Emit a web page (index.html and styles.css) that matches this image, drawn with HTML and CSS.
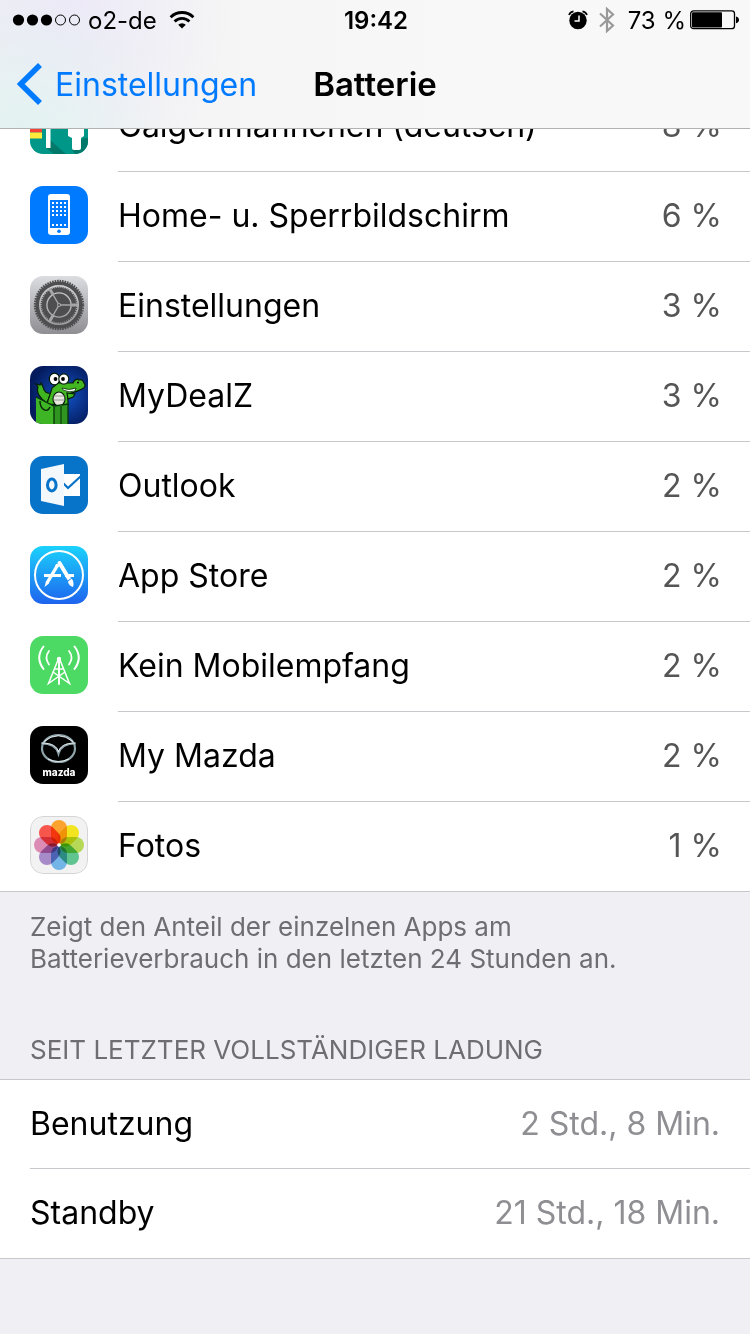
FILE: index.html
```html
<!DOCTYPE html>
<html lang="de">
<head>
    <meta charset="UTF-8">
    <meta name="viewport" content="width=device-width, initial-scale=1.0">
    <title>Batterie</title>
    <link rel="stylesheet" href="styles.css">
</head>
<body>

<header class="header">
    <div class="status-bar">
        <div class="status-left">
            <svg class="signal" width="68" height="14" viewBox="0 0 68 14">
                <circle cx="6.5" cy="7" r="5.6"/>
                <circle cx="20.5" cy="7" r="5.6"/>
                <circle cx="34.5" cy="7" r="5.6"/>
                <circle cx="48.5" cy="7" r="5" fill="none" stroke="#000"/>
                <circle cx="62.5" cy="7" r="5" fill="none" stroke="#000"/>
            </svg>
            <span class="carrier">o2-de</span>
            <svg width="26" height="18" viewBox="0 0 26 18" fill="none" stroke="#000" stroke-width="2.8">
                <path d="M1.6 6.2a16.2 16.2 0 0 1 22.8 0"/>
                <path d="M5.6 10.4a10.4 10.4 0 0 1 14.8 0"/>
                <path d="M13 17.6L9.2 13.7a5.4 5.4 0 0 1 7.6 0z" fill="#000" stroke="none"/>
            </svg>
        </div>
        <span class="time">19:42</span>
        <div class="status-right">
            <svg width="20" height="20" viewBox="0 0 20 20">
                <circle cx="10" cy="10.5" r="8.7"/>
                <path d="M1 5a6 6 0 0 1 4.5-3.6M19 5a6 6 0 0 0-4.5-3.6" fill="none" stroke="#000" stroke-width="1.7"/>
                <path d="M11 5.5v5.5H6.5" fill="none" stroke="#fff" stroke-width="1.5"/>
            </svg>
            <svg class="bluetooth" width="16" height="26" viewBox="0 0 16 26" fill="none" stroke="#999" stroke-width="2.2">
                <path d="M1 6.5L14 18.5L8 24V2L14 7.5L1 19.5"/>
            </svg>
            <span>73 %</span>
            <svg class="battery" width="50" height="20" viewBox="0 0 50 20">
                <rect x="0.7" y="0.9" width="43.8" height="17.8" rx="2.8" fill="none" stroke="#000" stroke-width="1.3"/>
                <rect x="2" y="2.2" width="30" height="15.2" rx="1"/>
                <path d="M46 6.5c4 .8 4 6 0 6.800z"/>
            </svg>
        </div>
    </div>
    <nav class="nav-bar">
        <a href="#" class="back">
            <svg width="26" height="42" viewBox="0 0 26 42" fill="none" stroke="#007aff" stroke-width="5.6">
                <path d="M23 2L3.7 21L23 40"/>
            </svg>
            Einstellungen
        </a>
        <h1 class="title">Batterie</h1>
    </nav>
</header>

<main>
    <!-- Apps -->
    <ul class="list app-list">
        <li class="app">
            <svg class="icon" viewBox="0 0 58 58">
                <rect width="58" height="58" fill="#009688"/>
                <path d="M20 44v8h-4l8 6h12zM51 44v10h-9l3 4h8l5-6V42h-4z" fill="#00796b"/>
                <rect y="22" width="12" height="14.5" fill="#f44336"/>
                <rect y="36.5" width="12" height="6" fill="#ffeb3b"/>
                <rect x="16" y="10" width="4.5" height="42" fill="#fff"/>
                <path d="M38 20h16v20l-3 2v10q0 2-2 2h-5q-2 0-2-2V42l-4-2z" fill="#fff"/>
            </svg>
            <div class="row">
                <span>Galgenmännchen (deutsch)</span>
                <span class="percent">8 %</span>
            </div>
        </li>
        <li class="app">
            <svg class="icon" viewBox="0 0 58 58">
                <defs>
                    <pattern id="dots" x="22" y="16" width="4" height="4" patternUnits="userSpaceOnUse">
                        <rect width="2" height="2" fill="#fff"/>
                    </pattern>
                </defs>
                <rect width="58" height="58" fill="#007aff"/>
                <rect x="18" y="8" width="22" height="41" rx="3" fill="#fff"/>
                <rect x="20" y="14" width="18" height="28" fill="#007aff"/>
                <rect x="22" y="16" width="14" height="14" fill="url(#dots)"/>
                <path d="M22 38h2v2h-2zM26 38h2v2h-2zM30 38h2v2h-2zM34 38h2v2h-2z" fill="#fff"/>
                <circle cx="29" cy="45.3" r="1.8" fill="#007aff"/>
            </svg>
            <div class="row">
                <span>Home- u. Sperrbildschirm</span>
                <span class="percent">6 %</span>
            </div>
        </li>
        <li class="app">
            <svg class="icon" viewBox="0 0 58 58">
                <defs>
                    <linearGradient id="gray" x2="0" y2="1">
                        <stop stop-color="#dcdde0"/>
                        <stop offset="1" stop-color="#8e8e93"/>
                    </linearGradient>
                </defs>
                <rect width="58" height="58" fill="url(#gray)"/>
                <g fill="none" stroke="#4e4e50">
                    <circle cx="29" cy="29" r="21.8" stroke-width="3.6"/>
                    <circle cx="29" cy="29" r="24" stroke-width="2.4" stroke-dasharray="1.6 .91"/>
                    <circle cx="29" cy="29" r="15" stroke-width="4.4"/>
                    <circle cx="29" cy="29" r="17.6" stroke-width="1.6" stroke-dasharray="1.2 .8"/>
                </g>
                <circle cx="29" cy="29" r="11.4" fill="#4e4e50"/>
                <path d="M29 29h19M29 29l-9.5-16.5M29 29l-9.5 16.5" stroke="#a6a6a9" stroke-width="1.5"/>
                <path d="M40.500 29h7M23.300 19l-3.500-6M23.300 39l-3.500 6" stroke="#a6a6a9" stroke-width="3"/>
                <circle cx="29" cy="29" r="2" fill="#a6a6a9"/>
                <circle cx="29" cy="29" r="1" fill="#4e4e50"/>
            </svg>
            <div class="row">
                <span>Einstellungen</span>
                <span class="percent">3 %</span>
            </div>
        </li>
        <li class="app">
            <svg class="icon" viewBox="0 0 58 58">
                <defs>
                    <radialGradient id="night" cx=".6" cy=".5" r=".6">
                        <stop stop-color="#1253c8"/>
                        <stop offset="1" stop-color="#041a5c"/>
                    </radialGradient>
                </defs>
                <rect width="58" height="58" fill="url(#night)"/>
                <g stroke="#041c06" stroke-width="1.2">
                    <path d="M17 37C10 33 6 26 8 21l-2-3 4 1 1-2 2 4c1 5 4 7 8 6z" fill="#3fb51f"/>
                    <path d="M17 38c2-8 4-11 5-16l6-5h15c1-3 4-5 6-3 2-1 4 0 5 3 2 2 1 5-2 6-5 3-8 3-11 4l-3 5v7z" fill="#43b722"/>
                    <path d="M37 27l8 1-2 3-5 2z" fill="#43b722"/>
                    <path d="M32 22q7 3 14 0l-1 3q-6 2-12-1z" fill="#fff" stroke-width=".7"/>
                    <ellipse cx="24.5" cy="13" rx="5.2" ry="5.8" fill="#fff"/>
                    <ellipse cx="33.800" cy="13" rx="5" ry="5.2" fill="#fff"/>
                    <ellipse cx="29" cy="33" rx="6" ry="7" fill="#e8e8e0"/>
                </g>
                <path d="M23.500 30h11M23 34h12" stroke="#888" stroke-width=".8"/>
                <circle cx="25.5" cy="13" r="1.9"/>
                <circle cx="33" cy="13" r="1.9"/>
                <circle cx="48" cy="16.500" r="1"/>
                <path d="M6 31l18 9v18H6z" fill="#3db524"/>
                <path d="M24 40l14-2v20H24z" fill="#2f9420"/>
                <path d="M6 31l18 9 14-2v20M24 40v18" fill="none" stroke="#07330a" stroke-width="1.3"/>
                <path d="M31 39v19" stroke="#186114" stroke-width="2"/>
                <path d="M10 35c0 8 7 13 10 6" fill="none" stroke="#06240a" stroke-width="1.4"/>
            </svg>
            <div class="row">
                <span>MyDealZ</span>
                <span class="percent">3 %</span>
            </div>
        </li>
        <li class="app">
            <svg class="icon" viewBox="0 0 58 58">
                <rect width="58" height="58" fill="#0773c9"/>
                <rect x="33" y="18" width="17" height="22" fill="#fff"/>
                <path d="M33 27l5 5 13-12" fill="none" stroke="#0773c9" stroke-width="2.2"/>
                <path d="M11 13l23-5v42l-23-5z" fill="#f3f8fd"/>
                <ellipse cx="21.8" cy="29" rx="4.3" ry="6" fill="none" stroke="#0773c9" stroke-width="3"/>
            </svg>
            <div class="row">
                <span>Outlook</span>
                <span class="percent">2 %</span>
            </div>
        </li>
        <li class="app">
            <svg class="icon" viewBox="0 0 58 58">
                <defs>
                    <linearGradient id="blue" x2="0" y2="1">
                        <stop stop-color="#1bd2fc"/>
                        <stop offset="1" stop-color="#1e63ee"/>
                    </linearGradient>
                </defs>
                <rect width="58" height="58" fill="url(#blue)"/>
                <g fill="none" stroke="#fff">
                    <circle cx="29" cy="29" r="24" stroke-width="2"/>
                    <path d="M14 29.5h17M35 29.5h9" stroke-width="2.8"/>
                    <path d="M28 18.5L17 37" stroke-width="3.4"/>
                    <path d="M29.5 17L41 36" stroke-width="4" stroke-linecap="round"/>
                </g>
                <path d="M16 35.5l3 2-4.5 3.5zM38 36l4-3q2.5 4 1 8-4-1-5-5z" fill="#fff"/>
                <circle cx="27" cy="20" r="1.8" fill="#fff"/>
                <path d="M37.5 35l4-2.5" stroke="#2386f3"/>
            </svg>
            <div class="row">
                <span>App Store</span>
                <span class="percent">2 %</span>
            </div>
        </li>
        <li class="app">
            <svg class="icon" viewBox="0 0 58 58">
                <rect width="58" height="58" fill="#4cd964"/>
                <g fill="none" stroke="#fff" stroke-linecap="round">
                    <path d="M13.5 10.5q-8.500 11 0 22.500M44.5 10.5q8.500 11 0 22.500" stroke-width="2"/>
                    <path d="M19 15q-5 6.500 0 13.500M39 15q5 6.500 0 13.500" stroke-width="1.8"/>
                    <path d="M29 23v25" stroke-width="2"/>
                    <path d="M28 24L18.500 47.500 35 36M30 24l9.500 23.500L23 36M25 33h8" stroke-width="1.5"/>
                </g>
                <circle cx="29" cy="23" r="2.200" fill="#fff"/>
            </svg>
            <div class="row">
                <span>Kein Mobilempfang</span>
                <span class="percent">2 %</span>
            </div>
        </li>
        <li class="app">
            <svg class="icon" viewBox="0 0 58 58">
                <rect width="58" height="58"/>
                <g fill="none" stroke="#8fa3aa" stroke-width="2.2">
                    <ellipse cx="28.5" cy="22.5" rx="16.5" ry="13.5"/>
                    <path d="M11.5 17.500c10 0 15 3 17 10 2-7 7-10 17-10"/>
                </g>
                <g fill="none" stroke="#eef6f8" stroke-width=".9">
                    <path d="M14 15.500q14-11.500 29 0M18 33q10 5 21 0"/>
                    <path d="M11.500 17c11 0 15.500 3.500 17 9 1.500-5.500 6-9 17-9"/>
                </g>
                <text x="29" y="50" class="mazda">mazda</text>
            </svg>
            <div class="row">
                <span>My Mazda</span>
                <span class="percent">2 %</span>
            </div>
        </li>
        <li class="app">
            <svg class="icon" viewBox="0 0 58 58">
                <rect x=".5" y=".5" width="57" height="57" rx="12.500" fill="#f2f2f2" stroke="#d5d5d5"/>
                <g class="petals">
                    <rect x="21" y="4" width="16" height="24" rx="8" fill="#fba32f"/>
                    <rect x="21" y="4" width="16" height="24" rx="8" fill="#f2e41f" transform="rotate(45 29 29)"/>
                    <rect x="21" y="4" width="16" height="24" rx="8" fill="#b5d857" transform="rotate(90 29 29)"/>
                    <rect x="21" y="4" width="16" height="24" rx="8" fill="#60c491" transform="rotate(135 29 29)"/>
                    <rect x="21" y="4" width="16" height="24" rx="8" fill="#73b5e6" transform="rotate(180 29 29)"/>
                    <rect x="21" y="4" width="16" height="24" rx="8" fill="#a78bc8" transform="rotate(225 29 29)"/>
                    <rect x="21" y="4" width="16" height="24" rx="8" fill="#dc8bb5" transform="rotate(270 29 29)"/>
                    <rect x="21" y="4" width="16" height="24" rx="8" fill="#f6564c" transform="rotate(315 29 29)"/>
                </g>
                <circle cx="29" cy="29" r="1.800" fill="#fff"/>
            </svg>
            <div class="row">
                <span>Fotos</span>
                <span class="percent">1 %</span>
            </div>
        </li>
    </ul>
    <p class="note">Zeigt den Anteil der einzelnen Apps am<br>Batterieverbrauch in den letzten 24 Stunden an.</p>

    <!-- Seit letzter Ladung -->
    <h2 class="section-title">Seit letzter vollständiger Ladung</h2>
    <ul class="list usage-list">
        <li class="row">
            <span>Benutzung</span>
            <span class="value">2 Std., 8 Min.</span>
        </li>
        <li class="row">
            <span>Standby</span>
            <span class="value">21 Std., 18 Min.</span>
        </li>
    </ul>
</main>

</body>
</html>
```
FILE: styles.css
```css
body {
    font-family: Inter, "Liberation Sans", sans-serif;
    font-size: 32px;
    color: #000;
    background-color: #efeff4;
    margin: 0;
}
svg {
    display: block;
    flex: none;
}
.header {
    position: sticky;
    top: 0;
    z-index: 1;
    border-bottom: 1px solid #b2b2b2;
    background:
        radial-gradient(circle at 20px 140px, #e2f3f1, rgba(226, 243, 241, 0) 150px),
        radial-gradient(circle at 60px 20px, #ece9f7, rgba(236, 233, 247, 0) 170px),
        linear-gradient(90deg, #f2f2f3, #f8f8f8 60%);
}
.status-bar {
    display: grid;
    grid-template-columns: 1fr auto 1fr;
    align-items: center;
    height: 40px;
    padding: 0 10px 0 12px;
    font-size: 24px;
}
.status-left, .status-right {
    display: flex;
    align-items: center;
}
.status-right {
    justify-content: flex-end;
}
.carrier {
    margin: 0 12px 0 8px;
}
.time {
    font-weight: 600;
}
.bluetooth {
    margin: 0 13px 0 11px;
}
.battery {
    margin-left: 4px;
}
.nav-bar {
    display: grid;
    grid-template-columns: 1fr auto 1fr;
    align-items: center;
    height: 88px;
    padding: 0 17px;
}
.back {
    display: flex;
    align-items: center;
    gap: 12px;
    color: #007aff;
    text-decoration: none;
}
.title {
    margin: 0;
    font-size: 33px;
    font-weight: 600;
}
.list {
    list-style: none;
    margin: 0;
    padding: 0;
    background-color: white;
    border-bottom: 1px solid #c8c7cc;
}
/* scrolled part of the list sits under the header */
.app-list {
    margin-top: -47px;
}
.app {
    display: flex;
    padding-left: 30px;
}
.icon {
    width: 58px;
    height: 58px;
    margin: 14px 30px 0 0;
    border-radius: 13px;
    overflow: hidden;
}
.row {
    box-sizing: border-box;
    display: flex;
    flex: 1;
    align-items: center;
    justify-content: space-between;
    height: 90px;
    padding: 0 28px 2px 0;
    border-bottom: 1px solid #c8c7cc;
}
.app:last-child .row, .usage-list .row:last-child {
    height: 89px;
    border-bottom: none;
}
.percent {
    color: #555;
}
.value {
    color: #8e8e93;
}
.petals {
    isolation: isolate;
}
.petals rect {
    mix-blend-mode: multiply;
}
.mazda {
    font: 800 10px Inter, sans-serif;
    text-anchor: middle;
    fill: #fff;
}
.note, .section-title {
    margin: 0;
    padding: 0 30px;
    font-size: 26px;
    font-weight: 400;
    line-height: 32px;
    color: #6d6d72;
}
.note {
    padding-top: 19px;
}
.section-title {
    padding-top: 59px;
    padding-bottom: 13px;
    text-transform: uppercase;
}
.usage-list {
    border-top: 1px solid #c8c7cc;
}
.usage-list .row {
    height: 89px;
    margin-left: 30px;
    padding-right: 30px;
}
```
